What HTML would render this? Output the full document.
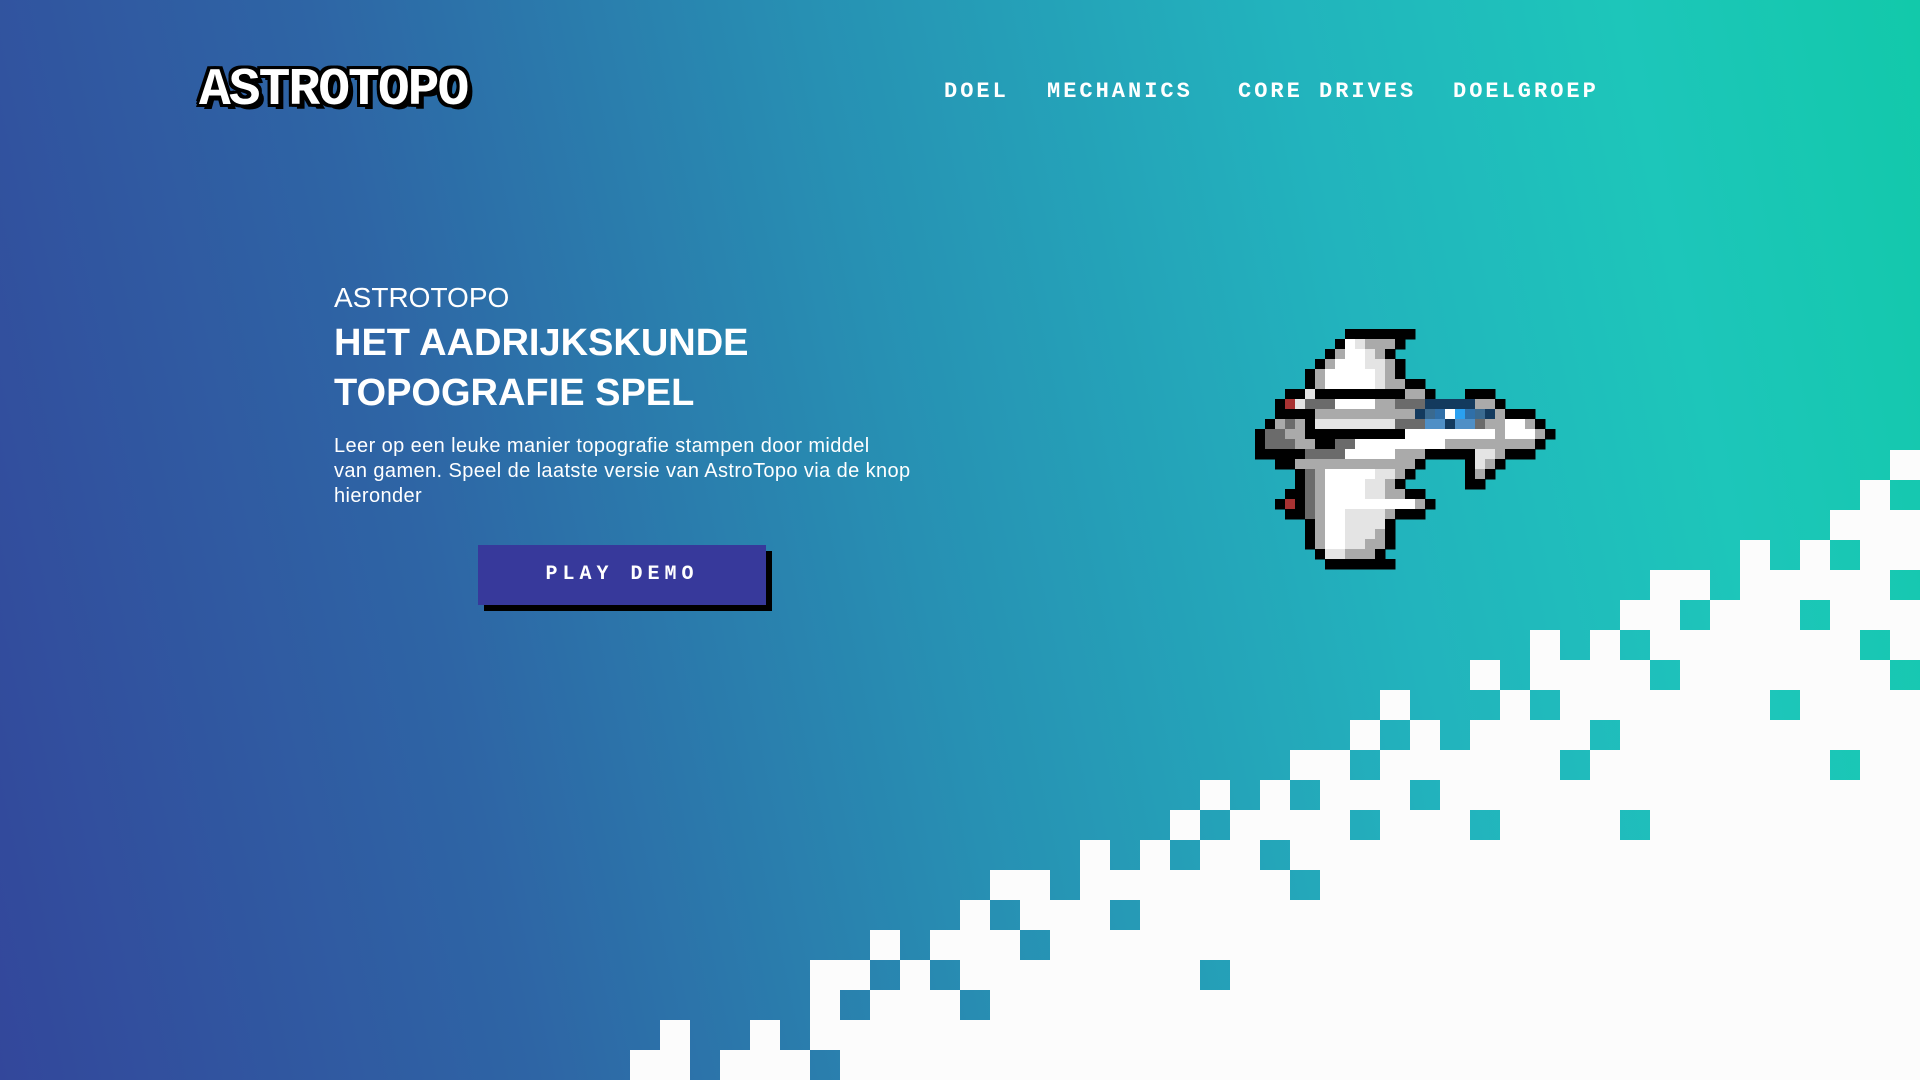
<!DOCTYPE html>
<html><head><meta charset="utf-8"><style>
html,body{margin:0;padding:0;width:1920px;height:1080px;overflow:hidden}
body{position:relative;background:linear-gradient(78deg,#33479b 0%,#2e65a5 25%,#2790b3 48%,#22b3bd 70%,#1dc6ba 86%,#12c9aa 100%);font-family:"Liberation Sans",sans-serif;color:#fff}
#stairs,#plane{position:absolute;left:0;top:0}
.logo{position:absolute;left:199px;top:60px;font:bold 53px "Liberation Mono",monospace;letter-spacing:-2px;color:#fff;
text-shadow:3px 0 #000,-3px 0 #000,0 3px #000,0 -3px #000,3px 3px #000,-3px 3px #000,3px -3px #000,-3px -3px #000,5px 5px #000}
nav{position:absolute;top:79px;left:944px;font:bold 22px "Liberation Mono",monospace;letter-spacing:3px}
nav span{position:absolute;white-space:nowrap}
.sub{position:absolute;left:334px;top:282px;font-size:28px;font-weight:300}
h1{position:absolute;left:334px;top:318px;margin:0;font-size:38px;font-weight:bold;line-height:50px}
p{position:absolute;left:334px;top:434px;margin:0;white-space:nowrap;font-size:20px;letter-spacing:0.4px;line-height:25px}
.btn{position:absolute;left:478px;top:545px;width:288px;height:60px;background:#37399b;box-shadow:6px 6px 0 #000;
font:bold 20px "Liberation Mono",monospace;letter-spacing:5px;text-align:center;line-height:60px}
</style></head><body>
<svg id="stairs" width="1920" height="1080"></svg>
<svg id="plane" width="1920" height="1080"></svg>
<div class="logo">ASTROTOPO</div>
<nav><span style="left:0">DOEL</span><span style="left:103px">MECHANICS</span><span style="left:294px">CORE DRIVES</span><span style="left:509px">DOELGROEP</span></nav>
<div class="sub">ASTROTOPO</div>
<h1>HET AADRIJKSKUNDE<br>TOPOGRAFIE SPEL</h1>
<p>Leer op een leuke manier topografie stampen door middel<br>van gamen. Speel de laatste versie van AstroTopo via de knop<br>hieronder</p>
<div class="btn">PLAY DEMO</div>
<script>
var rows={15:"63",16:"62",17:"61-63",18:"58,60,62-63",19:"55-56,58-62",20:"54-55,57-59,61-63",21:"51,53,55-61,63",22:"49,51-54,56-62",23:"46,50,52-58,60-63",24:"45,47,49-52,54-63",25:"43-44,46-51,53-60,62-63",26:"40,42,44-46,48-63",27:"39,41-44,46-48,50-53,55-63",28:"36,38,40-41,43-63",29:"33-34,36-42,44-63",30:"32,34-36,38-63",31:"29,31-33,35-63",32:"27-28,30,32-39,41-63",33:"27,29-31,33-63",34:"22,25,27-63",35:"21-22,24-26,28-63"};
var s="";
for(var r in rows){rows[r].split(",").forEach(function(g){var p=g.split("-");var a=+p[0],b=p.length>1?+p[1]:a;
s+='<rect x="'+a*30+'" y="'+r*30+'" width="'+(b-a+1)*30+'" height="30" fill="#fcfcfc"/>';});}
document.getElementById("stairs").innerHTML=s;
var P=[".........KKKKKKK..............","........KWLGGGK...............",".......KGWWLGK................","......KGWWWLLGK...............",".....KGWWWWWLGK...............",".....KGWWWWWLGGKK.............","...KKLKKKKKKKKKGGK...KKK......","..KRLDDDWWWWGGDDDNNNNNGGK.....","..KKKKGGGGGGGGGGNQBWCBQNGKKK..",".KGDGKLLLLLLLLDDDPPNPPDGGWWGK.","KDDGGKKKKKKKKKKWWWWWWWWWGWWWGK","KDDDGGKKDDWWWWWWWWWGGGGGGGGGK.","KKKKKDDDDWWWWWGGGKKKKKLLGKKK..","..KKGGGGGGGGGGGGK....KLGK.....","....KDGWWWWWLLGK.....KGK......","....KDGWWWWLLGK......KK.......","...KKDGWWWWLLGGKK.............","..KRKDGWWWWWWWWWGK............","...KKDGWWLLLLGKKK.............",".....KGWWLLLLK................",".....KGWWLLLGK................",".....KGWWLLGGK................","......KLLGGGK.................",".......KKKKKKK................"];
var C={K:"#000",W:"#fff",L:"#e4e4e4",G:"#aaa",D:"#6b6b6b",R:"#a83232",N:"#133a5e",B:"#2f6fa8",C:"#2aa0f0",P:"#4f8fc6",Q:"#3a6a90"};
var t="";
P.forEach(function(row,i){for(var j=0;j<row.length;j++){var c=row[j];if(c!=".")t+='<rect x="'+(1255+j*10)+'" y="'+(329+i*10)+'" width="10.5" height="10.5" fill="'+C[c]+'"/>';}});
document.getElementById("plane").innerHTML=t;
</script>
</body></html>
